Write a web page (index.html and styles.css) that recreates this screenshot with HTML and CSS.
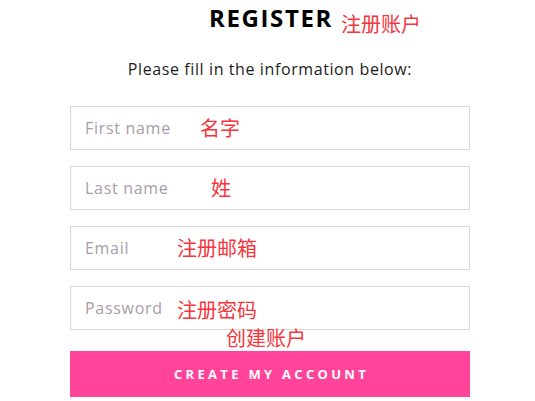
FILE: index.html
```html
<!DOCTYPE html>
<html lang="en">
<head>
<meta charset="utf-8">
<title>Register</title>
<link rel="stylesheet" href="styles.css">
</head>
<body>
<div class="page">
  <form class="register">
    <h1 class="title">REGISTER</h1>
    <p class="subtitle">Please fill in the information below:</p>
    <div class="field"><input type="text" placeholder="First name"></div>
    <div class="field"><input type="text" placeholder="Last name"></div>
    <div class="field"><input type="email" placeholder="Email"></div>
    <div class="field"><input type="password" placeholder="Password"></div>
    <button type="button" class="submit">CREATE MY ACCOUNT</button>
  </form>
  <span class="note note-title">注册账户</span>
  <span class="note note-first">名字</span>
  <span class="note note-last">姓</span>
  <span class="note note-email">注册邮箱</span>
  <span class="note note-pass">注册密码</span>
  <span class="note note-create">创建账户</span>
</div>
</body>
</html>
```

FILE: styles.css
```css
html, body {
  margin: 0;
  padding: 0;
  background: #ffffff;
}

.page {
  position: relative;
  width: 535px;
  height: 401px;
  overflow: hidden;
  font-family: "Open Sans", "Liberation Sans", sans-serif;
}

.register {
  width: 400px;
  margin-left: 70px;
  display: flex;
  flex-direction: column;
}

.title {
  margin: 4px 0 0;
  font-size: 24px;
  line-height: 28px;
  font-weight: 700;
  letter-spacing: 1.6px;
  text-align: center;
  color: #000000;
  padding-left: 2px;
}

.subtitle {
  margin: 27px 0 0;
  font-size: 16px;
  line-height: 20px;
  text-align: center;
  color: #1c1c1c;
  letter-spacing: 0.6px;
}

.field {
  margin-top: 16px;
}

.subtitle + .field {
  margin-top: 27px;
}

.field input {
  display: block;
  box-sizing: border-box;
  width: 400px;
  height: 44px;
  margin: 0;
  padding: 0 14px;
  border: 1px solid #d9d9d9;
  border-radius: 0;
  font-family: inherit;
  font-size: 16px;
  letter-spacing: 0.7px;
  color: #333;
  background: #fff;
  outline: none;
}

.field input::placeholder {
  color: #a99ca9;
  opacity: 1;
}

.submit {
  display: block;
  margin-top: 21px;
  width: 400px;
  height: 46px;
  border: 0;
  background: #ff4499;
  color: #ffffff;
  font-family: inherit;
  font-size: 13px;
  font-weight: 700;
  letter-spacing: 3.3px;
  padding: 0 0 0 3px;
}

.note {
  position: absolute;
  font-family: "Noto Sans CJK SC", sans-serif;
  font-size: 20px;
  line-height: 22px;
  color: #f5363c;
  white-space: nowrap;
}

.note-title { left: 341px; top: 13px; }
.note-first { left: 200px; top: 117px; }
.note-last { left: 211px; top: 177px; }
.note-email { left: 177px; top: 237px; }
.note-pass { left: 177px; top: 299px; }
.note-create { left: 226px; top: 327px; }
```
